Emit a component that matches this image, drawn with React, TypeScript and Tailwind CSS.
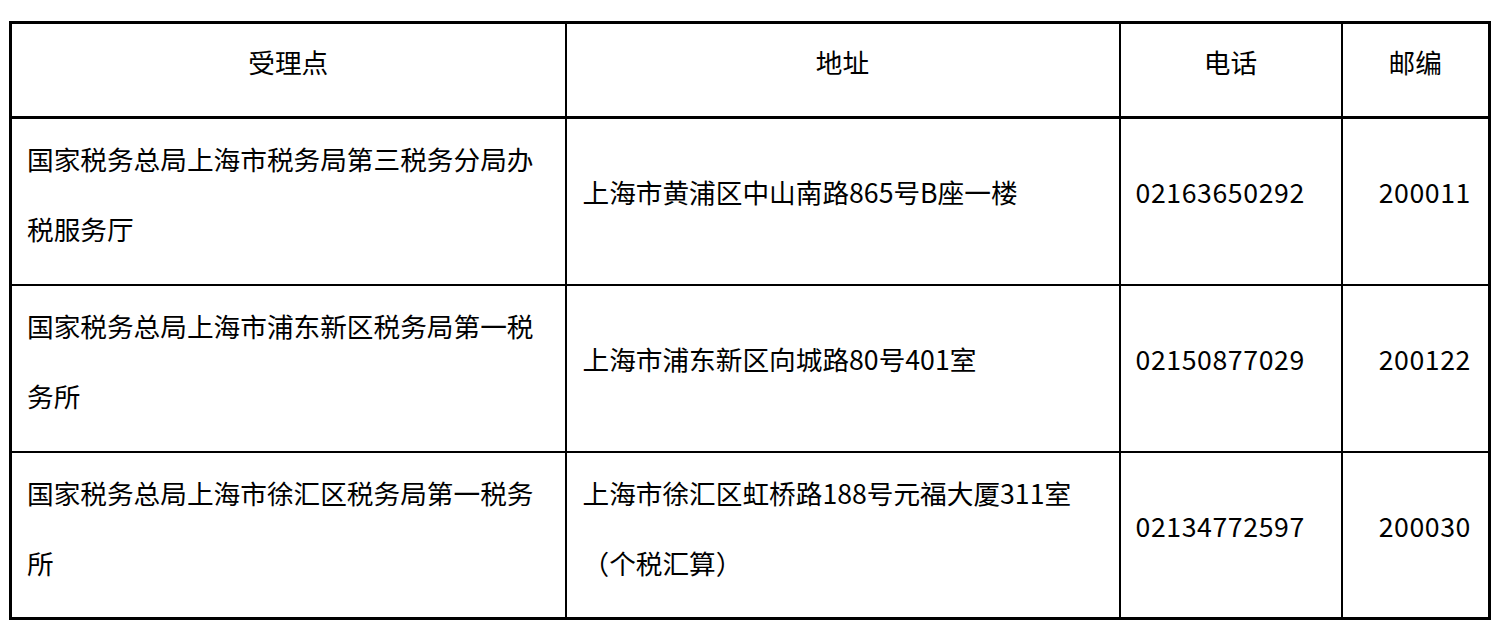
const rows = [
  {
    name: ["国家税务总局上海市税务局第三税务分局办", "税服务厅"],
    address: ["上海市黄浦区中山南路865号B座一楼"],
    phone: "02163650292",
    zip: "200011",
  },
  {
    name: ["国家税务总局上海市浦东新区税务局第一税", "务所"],
    address: ["上海市浦东新区向城路80号401室"],
    phone: "02150877029",
    zip: "200122",
  },
  {
    name: ["国家税务总局上海市徐汇区税务局第一税务", "所"],
    address: ["上海市徐汇区虹桥路188号元福大厦311室", "（个税汇算）"],
    phone: "02134772597",
    zip: "200030",
  },
];

function Lines({ lines }: { lines: string[] }) {
  return (
    <>
      {lines.map((l, i) => (
        <span key={i}>
          {i > 0 && <br />}
          {l}
        </span>
      ))}
    </>
  );
}

export default function App() {
  return (
    <div className="min-h-[637px] bg-white pl-[9px] pt-[21px] font-['Noto_Sans_CJK_SC',sans-serif] text-[26.67px] leading-[70px] text-black">
      <table className="w-[1479px] table-fixed border-collapse border-[3px] border-black">
        <colgroup>
          <col className="w-[555px]" />
          <col className="w-[554px]" />
          <col className="w-[222px]" />
          <col className="w-[148px]" />
        </colgroup>
        <thead>
          <tr className="border-b-[3px] border-black">
            <th className="h-[95px] border-2 border-black pb-[16px] pt-0 text-center font-normal">受理点</th>
            <th className="border-2 border-black pb-[16px] pt-0 text-center font-normal">地址</th>
            <th className="border-2 border-black pb-[16px] pt-0 text-center font-normal">电话</th>
            <th className="border-2 border-black pb-[16px] pt-0 text-center font-normal">邮编</th>
          </tr>
        </thead>
        <tbody>
          {rows.map((r) => (
            <tr key={r.phone} className="h-[167px]">
              <td className="border-2 border-black pb-[14px] pl-[15px] pt-0 align-middle">
                <Lines lines={r.name} />
              </td>
              <td
                className={
                  r.address.length > 1
                    ? "border-2 border-black pb-[14px] pl-[16px] pt-0 align-middle"
                    : "border-2 border-black pb-[18px] pl-[16px] pt-0 align-middle"
                }
              >
                <Lines lines={r.address} />
              </td>
              <td className="border-2 border-black pb-[18px] pl-[15px] pt-0 align-middle tracking-[0.6px]">
                {r.phone}
              </td>
              <td className="border-2 border-black pb-[18px] pr-[17px] pt-0 text-right align-middle tracking-[0.6px]">
                {r.zip}
              </td>
            </tr>
          ))}
        </tbody>
      </table>
    </div>
  );
}
